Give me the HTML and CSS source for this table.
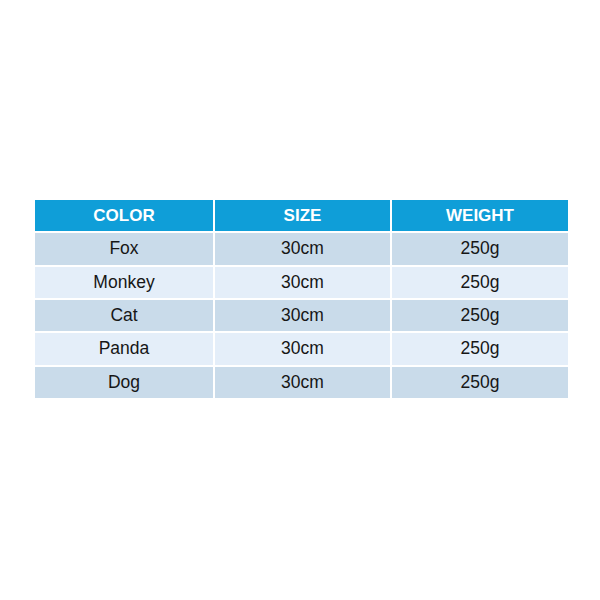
FILE: index.html
```html
<!DOCTYPE html>
<html>
<head>
<meta charset="utf-8">
<link rel="stylesheet" href="styles.css">
</head>
<body>
<div class="table">
  <div class="cell head">COLOR</div>
  <div class="cell head">SIZE</div>
  <div class="cell head">WEIGHT</div>

  <div class="cell dark">Fox</div>
  <div class="cell dark">30cm</div>
  <div class="cell dark">250g</div>

  <div class="cell light">Monkey</div>
  <div class="cell light">30cm</div>
  <div class="cell light">250g</div>

  <div class="cell dark">Cat</div>
  <div class="cell dark">30cm</div>
  <div class="cell dark">250g</div>

  <div class="cell light">Panda</div>
  <div class="cell light">30cm</div>
  <div class="cell light">250g</div>

  <div class="cell dark">Dog</div>
  <div class="cell dark">30cm</div>
  <div class="cell dark">250g</div>
</div>
</body>
</html>
```
FILE: styles.css
```css
html, body {
  margin: 0;
  padding: 0;
  background: #ffffff;
}
body {
  width: 600px;
  height: 600px;
  font-family: "Liberation Sans", Arial, sans-serif;
}
.table {
  margin-top: 200px;
  margin-left: 35px;
  width: 533px;
  display: grid;
  grid-template-columns: 178px 175px 176px;
  grid-auto-rows: 31.33px;
  gap: 2px;
}
.cell {
  display: flex;
  align-items: center;
  justify-content: center;
  font-size: 17.5px;
  color: #161616;
}
.head {
  background: #0f9ed8;
  color: #ffffff;
  font-weight: bold;
  font-size: 17px;
}
.dark {
  background: #c9dbea;
}
.light {
  background: #e4eef9;
}
```
